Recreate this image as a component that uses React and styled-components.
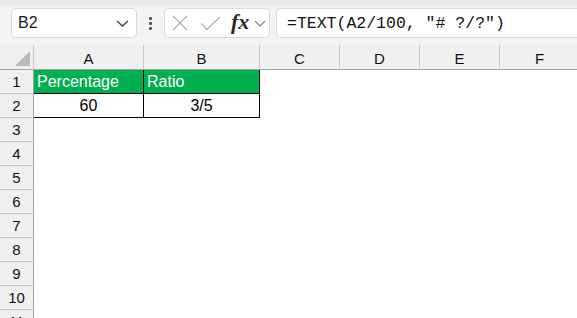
import React from "react";
import styled, { createGlobalStyle } from "styled-components";

const GlobalStyle = createGlobalStyle`
  html, body {
    margin: 0;
    padding: 0;
    background: #ffffff;
    overflow: hidden;
  }
`;

const columns = ["A", "B", "C", "D", "E", "F"];
const rows = [1, 2, 3, 4, 5, 6, 7, 8, 9, 10, 11];

const cells = {
  A1: { text: "Percentage", header: true },
  B1: { text: "Ratio", header: true },
  A2: { text: "60", center: true },
  B2: { text: "3/5", center: true },
};

export default function App() {
  return (
    <>
      <GlobalStyle />
      <Window>
        <TopStrip />
        <FormulaBar>
          <NameBox>
            <span>B2</span>
            <svg width="13" height="7" viewBox="0 0 13 7">
              <path d="M1 1 L6.5 6 L12 1" fill="none" stroke="#444" strokeWidth="1.3" />
            </svg>
          </NameBox>
          <Grip>
            <i />
            <i />
            <i />
          </Grip>
          <FxBox>
            <svg width="16" height="16" viewBox="0 0 16 16">
              <path d="M1 1 L15 15 M15 1 L1 15" stroke="#b3b3b3" strokeWidth="1.3" />
            </svg>
            <svg width="21" height="15" viewBox="0 0 21 15">
              <path d="M1 7.5 L7 13.5 L20 1" fill="none" stroke="#b3b3b3" strokeWidth="1.3" />
            </svg>
            <FxText>fx</FxText>
            <svg width="12" height="7" viewBox="0 0 12 7">
              <path d="M1 1 L6 6 L11 1" fill="none" stroke="#888" strokeWidth="1.2" />
            </svg>
          </FxBox>
          <FormulaInput>=TEXT(A2/100, "# ?/?")</FormulaInput>
        </FormulaBar>
        <Sheet>
          <Corner>
            <svg width="15" height="15" viewBox="0 0 15 15">
              <path d="M15 0 L15 15 L0 15 Z" fill="#b9b9b9" />
            </svg>
          </Corner>
          {columns.map((c) => (
            <ColHeader key={c}>{c}</ColHeader>
          ))}
          {rows.map((r) => (
            <React.Fragment key={r}>
              <RowHeader>{r}</RowHeader>
              {columns.map((c) => {
                const cell = cells[c + r];
                return (
                  <Cell
                    key={c + r}
                    $boxed={!!cell}
                    $fill={cell && cell.header}
                    $center={cell && cell.center}
                  >
                    {cell ? cell.text : ""}
                  </Cell>
                );
              })}
            </React.Fragment>
          ))}
        </Sheet>
      </Window>
    </>
  );
}

const Window = styled.div`
  width: 577px;
  height: 318px;
  overflow: hidden;
  background: #f3f3f3;
  font-family: "Liberation Sans", Arial, sans-serif;
`;

const TopStrip = styled.div`
  height: 6px;
  background: #ebebeb;
  box-shadow: 0 1px 1px rgba(0, 0, 0, 0.06);
`;

const FormulaBar = styled.div`
  height: 39px;
  display: flex;
  align-items: flex-start;
  padding: 2px 0 0 11px;
  box-sizing: border-box;
  background: #f3f3f3;
`;

const Box = styled.div`
  height: 30px;
  box-sizing: border-box;
  background: #ffffff;
  border: 1px solid #d9d9d9;
  border-radius: 5px;
  display: flex;
  align-items: center;
`;

const NameBox = styled(Box)`
  width: 126px;
  padding: 0 7px 0 6px;
  justify-content: space-between;
  font-size: 16px;
  color: #1a1a1a;
`;

const Grip = styled.div`
  width: 27px;
  height: 30px;
  display: flex;
  flex-direction: column;
  align-items: center;
  justify-content: center;
  gap: 2px;
  i {
    width: 3px;
    height: 3px;
    background: #555;
    border-radius: 1px;
  }
`;

const FxBox = styled(Box)`
  width: 106px;
  padding: 0 0 0 7px;
  svg:nth-child(2) {
    margin-left: 12px;
  }
  svg:last-child {
    margin-left: 5px;
  }
`;

const FxText = styled.span`
  margin-left: 10px;
  font-family: "Liberation Serif", "Times New Roman", serif;
  font-style: italic;
  font-weight: bold;
  font-size: 22px;
  color: #2a2a2a;
  line-height: 1;
  padding-bottom: 2px;
`;

const FormulaInput = styled(Box)`
  margin-left: 6px;
  flex: 1;
  border-right: none;
  border-radius: 5px 0 0 5px;
  padding-left: 10px;
  font-family: "Liberation Mono", "DejaVu Sans Mono", monospace;
  font-size: 16.5px;
  color: #111;
  white-space: pre;
`;

const Sheet = styled.div`
  display: grid;
  grid-template-columns: 34px 110px 116px repeat(4, 80px);
  grid-template-rows: 25px;
  grid-auto-rows: 24px;
  background: #ffffff;
  font-size: 16px;
`;

const Corner = styled.div`
  background: #f0f0f0;
  border-right: 1px solid #c8c8c8;
  border-bottom: 1px solid #a3a3a3;
  display: flex;
  align-items: flex-end;
  justify-content: flex-end;
  padding: 0 3px 3px 0;
`;

const ColHeader = styled.div`
  background: #f0f0f0;
  border-right: 1px solid #c8c8c8;
  border-bottom: 1px solid #a3a3a3;
  display: flex;
  align-items: center;
  justify-content: center;
  padding-top: 2px;
  font-size: 15px;
  color: #111;
`;

const RowHeader = styled.div`
  background: #f0f0f0;
  border-right: 1px solid #a3a3a3;
  border-bottom: 1px solid #c8c8c8;
  display: flex;
  align-items: center;
  justify-content: center;
  font-size: 15px;
  color: #111;
`;

const Cell = styled.div`
  display: flex;
  align-items: center;
  justify-content: ${(p) => (p.$center ? "center" : "flex-start")};
  padding: 0 3px;
  background: ${(p) => (p.$fill ? "#00b050" : "#ffffff")};
  color: ${(p) => (p.$fill ? "#ffffff" : "#000000")};
  border-right: 1px solid ${(p) => (p.$boxed ? "#000000" : "transparent")};
  border-bottom: 1px solid ${(p) => (p.$boxed ? "#000000" : "transparent")};
  white-space: nowrap;
  overflow: hidden;
`;
